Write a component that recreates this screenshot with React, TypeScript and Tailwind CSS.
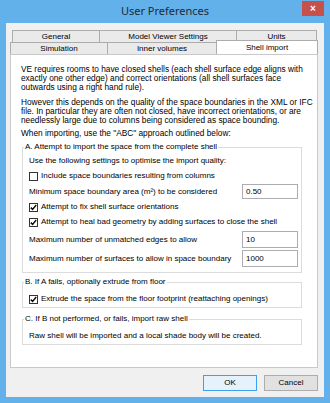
import React from "react";

const txt = "font-['Liberation_Sans',Arial,sans-serif] text-[8px] text-black";

function Check({ checked }: { checked?: boolean }) {
  return (
    <span className="w-[9px] h-[9px] border border-[#333] bg-white flex items-center justify-center shrink-0">
      {checked && (
        <svg width="7" height="7" viewBox="0 0 7 7">
          <path d="M0.8 3.6 L2.6 5.4 L6.2 1.1" stroke="#111" strokeWidth="1.5" fill="none" />
        </svg>
      )}
    </span>
  );
}

function CheckRow({ label, checked }: { label: string; checked?: boolean }) {
  return (
    <div className="h-[14px] flex items-center gap-[3px]">
      <Check checked={checked} />
      <span className="whitespace-nowrap">{label}</span>
    </div>
  );
}

function InputRow({ label, value, h }: { label: string; value: string; h: string }) {
  return (
    <div className={`flex items-center justify-between pr-[3px] ${h}`}>
      <span className="whitespace-nowrap">{label}</span>
      <div className="w-[56px] h-full border border-[#abadb3] bg-white flex items-center pl-[3px]">{value}</div>
    </div>
  );
}

function Group({ title, className, children }: { title: string; className: string; children: React.ReactNode }) {
  return (
    <fieldset className={`w-[280px] ml-[1px] border border-[#dcdcdc] p-0 ${className}`}>
      <legend className="ml-[1px] px-[1px] h-[10px] leading-[10px] whitespace-nowrap">{title}</legend>
      <div className="pl-[6px]">{children}</div>
    </fieldset>
  );
}

const Tab = ({ label, w, selected }: { label: string; w: string; selected?: boolean }) => (
  <div
    className={`${w} flex items-center justify-center border-t border-l border-r border-[#acacac] -mr-[1px] ${
      selected ? "bg-white h-[14px] -mt-[2px] relative z-10 border-b-0" : "h-[12px] bg-[#eaeaea]"
    }`}
  >
    {label}
  </div>
);

export default function App() {
  return (
    <div className={`w-[330px] h-[403px] bg-[#62b1ea] flex flex-col ${txt}`}>
      <div className="h-[23px] relative flex items-center justify-center">
        <span className="font-['Noto_Sans',sans-serif] text-[11px] text-[#1e2a36]">User Preferences</span>
        <div className="absolute left-[302px] top-[1px] w-[22px] h-[15px] bg-[#c7504b] flex items-center justify-center text-white text-[10px] font-bold">
          ×
        </div>
      </div>
      <div className="mx-[6px] h-[374px] bg-[#f0f0f0] flex flex-col">
        <div className="mt-[7px] ml-[6px] flex">
          <Tab label="General" w="w-[88px]" />
          <Tab label="Model Viewer Settings" w="w-[138px]" />
          <Tab label="Units" w="w-[81px]" />
        </div>
        <div className="ml-[4px] flex h-[12px]">
          <Tab label="Simulation" w="w-[98px]" />
          <Tab label="Inner volumes" w="w-[110px]" />
          <Tab label="Shell import" w="w-[102px]" selected />
        </div>
        <div className="ml-[4px] w-[308px] h-[314px] bg-white border border-[#c9c9c9] pt-[10px] pl-[10px]">
          <div className="text-[8.3px] leading-[9.2px]">
            <p className="whitespace-nowrap">
              VE requires rooms to have closed shells (each shell surface edge aligns with
              <br />
              exactly one other edge) and correct orientations (all shell surfaces face
              <br />
              outwards using a right hand rule).
            </p>
            <p className="mt-[5px] whitespace-nowrap">
              However this depends on the quality of the space boundaries in the XML or IFC
              <br />
              file. In particular they are often not closed, have incorrect orientations, or are
              <br />
              needlessly large due to columns being considered as space bounding.
            </p>
            <p className="mt-[4px] whitespace-nowrap">When importing, use the "ABC" approach outlined below:</p>
          </div>

          <Group title="A. Attempt to import the space from the complete shell" className="mt-[4px] pb-[5px]">
            <div className="mt-[2px] h-[14px] flex items-center">Use the following settings to optimise the import quality:</div>
            <div className="mt-[1px]">
              <CheckRow label="Include space boundaries resulting from columns" />
            </div>
            <div className="mt-[1px]">
              <InputRow label="Minimum space boundary area (m²) to be considered" value="0.50" h="h-[15px]" />
            </div>
            <div className="mt-[1px]">
              <CheckRow label="Attempt to fix shell surface orientations" checked />
            </div>
            <div className="mt-[1px]">
              <CheckRow label="Attempt to heal bad geometry by adding surfaces to close the shell" checked />
            </div>
            <div className="mt-[2px]">
              <InputRow label="Maximum number of unmatched edges to allow" value="10" h="h-[17px]" />
            </div>
            <div className="mt-[2px]">
              <InputRow label="Maximum number of surfaces to allow in space boundary" value="1000" h="h-[17px]" />
            </div>
          </Group>

          <Group title="B. If A fails, optionally extrude from floor" className="mt-[4px] pb-[1px]">
            <div className="mt-[5px]">
              <CheckRow label="Extrude the space from the floor footprint (reattaching openings)" checked />
            </div>
          </Group>

          <Group title="C. If B not performed, or fails, import raw shell" className="mt-[6px] pb-[1px]">
            <div className="mt-[5px] h-[14px] flex items-center">Raw shell will be imported and a local shade body will be created.</div>
          </Group>
        </div>
        <div className="mt-[7px] flex justify-end gap-[7px] pr-[6px]">
          <button className="w-[54px] h-[16px] border border-[#3c9ff0] bg-[#e5f1fb] flex items-center justify-center">OK</button>
          <button className="w-[54px] h-[16px] border border-[#adadad] bg-[#e1e1e1] flex items-center justify-center">Cancel</button>
        </div>
      </div>
    </div>
  );
}
